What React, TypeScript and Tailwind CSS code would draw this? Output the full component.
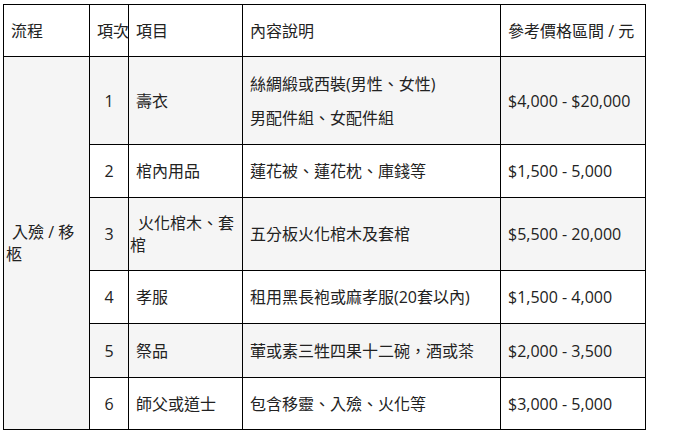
import React from 'react'

type Row = {
  no: string
  item: React.ReactNode
  desc: React.ReactNode
  price: string
  h: string
  gray: boolean
}

const rows: Row[] = [
  {
    no: '1',
    item: '壽衣',
    desc: (
      <>
        <p>絲綢緞或西裝(男性、女性)</p>
        <p className="mt-[12px]">男配件組、女配件組</p>
      </>
    ),
    price: '$4,000 - $20,000',
    h: 'h-[88px]',
    gray: true,
  },
  { no: '2', item: '棺內用品', desc: '蓮花被、蓮花枕、庫錢等', price: '$1,500 - 5,000', h: 'h-[53px]', gray: false },
  {
    no: '3',
    item: <span className="block -ml-[6px] indent-[8px]">火化棺木、套棺</span>,
    desc: '五分板火化棺木及套棺',
    price: '$5,500 - 20,000',
    h: 'h-[73px]',
    gray: true,
  },
  { no: '4', item: '孝服', desc: '租用黑長袍或麻孝服(20套以內)', price: '$1,500 - 4,000', h: 'h-[53px]', gray: false },
  { no: '5', item: '祭品', desc: '葷或素三牲四果十二碗，酒或茶', price: '$2,000 - 3,500', h: 'h-[54px]', gray: true },
  { no: '6', item: '師父或道士', desc: '包含移靈、入殮、火化等', price: '$3,000 - 5,000', h: 'h-[52px]', gray: false },
]

const cell = 'border border-black px-[7px] align-middle text-left font-normal'

export default function App() {
  return (
    <div
      className="min-h-[432px] bg-white pl-[3px] pt-[4px] text-[16px] leading-[22px] text-[#222]"
      style={{ fontFamily: '"Open Sans", "Noto Sans CJK TC", sans-serif' }}
    >
      <table className="w-[642px] table-fixed border-collapse border border-black">
        <colgroup>
          <col className="w-[86px]" />
          <col className="w-[39px]" />
          <col className="w-[114px]" />
          <col className="w-[258px]" />
          <col className="w-[145px]" />
        </colgroup>
        <thead>
          <tr className="h-[52px]">
            <th className={cell}>流程</th>
            <th className={`${cell} pr-0 whitespace-nowrap`}>項次</th>
            <th className={cell}>項目</th>
            <th className={cell}>內容說明</th>
            <th className={`${cell} whitespace-nowrap`}>參考價格區間 / 元</th>
          </tr>
        </thead>
        <tbody>
          {rows.map((r, i) => (
            <tr key={r.no} className={`${r.h} ${r.gray ? 'bg-[#f5f5f5]' : 'bg-white'}`}>
              {i === 0 && (
                <td rowSpan={6} className="border border-black bg-[#f5f5f5] pl-[2px] pr-[4px] align-middle indent-[6px]">
                  入殮 / 移柩
                </td>
              )}
              <td className="border border-black text-center align-middle">{r.no}</td>
              <td className={cell}>{r.item}</td>
              <td className={cell}>{r.desc}</td>
              <td className={`${cell} whitespace-nowrap`}>{r.price}</td>
            </tr>
          ))}
        </tbody>
      </table>
    </div>
  )
}
